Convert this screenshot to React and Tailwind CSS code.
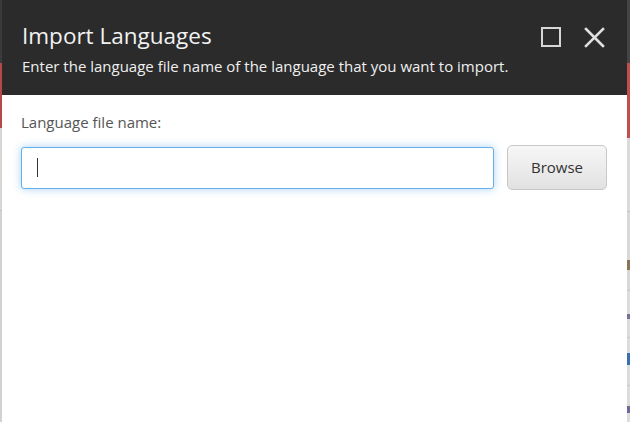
import React from 'react';

const font = { fontFamily: '"Open Sans", "Noto Sans", Arial, sans-serif' };

// thin slices of the page that shows behind the dialog
const LeftEdge = () => (
  <div className="w-[2px] flex flex-col shrink-0">
    <div className="h-[63px] bg-[#3b3b3b]" />
    <div className="h-[65px] bg-[#b8474a]" />
    <div className="h-[82px] bg-[#d6d6d6]" />
    <div className="h-px bg-[#c4c4c4]" />
    <div className="flex-1 bg-[#d2d2d2]" />
  </div>
);

const RightEdge = () => (
  <div className="w-[3px] flex flex-col shrink-0">
    <div className="h-[63px] bg-[#444444]" />
    <div className="h-[75px] bg-[#c0504d]" />
    <div className="h-[73px] bg-[#dadada]" />
    <div className="h-px bg-[#c2c2c2]" />
    <div className="h-[48px] bg-[#d8d8d8]" />
    <div className="h-[10px] bg-[#8a7558]" />
    <div className="h-[20px] bg-[#d8d8d8]" />
    <div className="h-px bg-[#c8c8c8]" />
    <div className="h-[23px] bg-[#dcdcdc]" />
    <div className="h-[5px] bg-[#7a6f9a]" />
    <div className="h-[18px] bg-[#dcdcdc]" />
    <div className="h-px bg-[#c8c8c8]" />
    <div className="h-[15px] bg-[#dcdcdc]" />
    <div className="h-[12px] bg-[#3d6fb0]" />
    <div className="h-[20px] bg-[#dcdcdc]" />
    <div className="h-px bg-[#c8c8c8]" />
    <div className="h-[20px] bg-[#dcdcdc]" />
    <div className="h-[7px] bg-[#6d6a98]" />
    <div className="flex-1 bg-[#dcdcdc]" />
  </div>
);

const Header = () => (
  <div className="h-[95px] bg-[#2b2b2b] pl-[20px] pr-[22px] pt-[20px] flex justify-between shrink-0">
    <div>
      <h1 className="text-[22.5px] leading-[32px] text-[#f2f2f2]">Import Languages</h1>
      <p className="mt-[4px] text-[15px] leading-[20px] text-[#efefef]">
        Enter the language file name of the language that you want to import.
      </p>
    </div>
    <div className="flex items-start gap-[23px] pt-[7px]">
      <button className="w-[20px] h-[20px] border-2 border-[#d6d6d6]" aria-label="Maximize" />
      <button className="w-[21px] h-[21px]" aria-label="Close">
        <svg viewBox="0 0 21 21" width="21" height="21">
          <path d="M2 2 L19 19 M19 2 L2 19" stroke="#e0e0e0" strokeWidth="2.6" strokeLinecap="square" fill="none" />
        </svg>
      </button>
    </div>
  </div>
);

export default function App() {
  return (
    <div className="w-[630px] h-[422px] flex overflow-hidden bg-white" style={font}>
      <LeftEdge />
      <div className="flex-1 flex flex-col">
        <Header />
        <div className="flex-1 bg-white pl-[19px] pr-[20px] pt-[17px]">
          <label className="block text-[15px] leading-[20px] text-[#555555]">Language file name:</label>
          <div className="mt-[13px] flex items-center gap-[13px]">
            <div className="flex-1 h-[42px] rounded-[3px] border border-[#66afe9] bg-white shadow-[0_0_8px_rgba(102,175,233,0.55)] flex items-center pl-[15px]">
              <span className="w-px h-[19px] bg-[#333333]" />
            </div>
            <button className="w-[100px] h-[45px] rounded-[5px] border border-[#c8c8c8] bg-gradient-to-b from-[#f7f7f7] to-[#e1e1e1] text-[15px] text-[#333333]">
              Browse
            </button>
          </div>
        </div>
      </div>
      <RightEdge />
    </div>
  );
}
